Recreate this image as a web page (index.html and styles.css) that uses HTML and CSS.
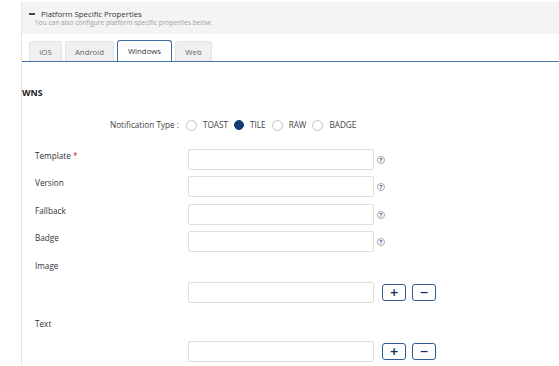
FILE: index.html
```html
<!DOCTYPE html>
<html lang="en">
<head>
  <meta charset="UTF-8">
  <meta name="viewport" content="width=device-width, initial-scale=1.0">
  <title>Platform Specific Properties</title>
  <link rel="stylesheet" href="styles.css">
</head>
<body>
  <div class="panel">
    <div class="panel-head">
      <div class="head-title"><span class="toggle"></span>Platform Specific Properties</div>
      <div class="head-sub">You can also configure platform specific properties below.</div>
    </div>

    <ul class="tabs">
      <li class="tab tab-ios">iOS</li>
      <li class="tab tab-android">Android</li>
      <li class="tab tab-windows active">Windows</li>
      <li class="tab tab-web">Web</li>
    </ul>

    <div class="pane">
      <h4 class="section">WNS</h4>

      <div class="type-row">
        <span class="type-label">Notification Type :</span>
        <span class="radio"></span><span class="radio-text">TOAST</span>
        <span class="radio checked"></span><span class="radio-text">TILE</span>
        <span class="radio"></span><span class="radio-text">RAW</span>
        <span class="radio"></span><span class="radio-text">BADGE</span>
      </div>

      <div class="field">
        <label class="field-label">Template <span class="req">*</span></label>
        <input class="text-input" type="text">
        <span class="help">?</span>
      </div>
      <div class="field">
        <label class="field-label">Version</label>
        <input class="text-input" type="text">
        <span class="help">?</span>
      </div>
      <div class="field">
        <label class="field-label">Fallback</label>
        <input class="text-input" type="text">
        <span class="help">?</span>
      </div>
      <div class="field">
        <label class="field-label">Badge</label>
        <input class="text-input" type="text">
        <span class="help">?</span>
      </div>

      <label class="list-label">Image</label>
      <div class="list-row">
        <input class="text-input" type="text">
        <button class="icon-btn">+</button>
        <button class="icon-btn">&minus;</button>
      </div>

      <label class="list-label">Text</label>
      <div class="list-row">
        <input class="text-input" type="text">
        <button class="icon-btn">+</button>
        <button class="icon-btn">&minus;</button>
      </div>
    </div>
  </div>
</body>
</html>
```

FILE: styles.css
```css
body {
  margin: 0;
  font-family: "Open Sans", "Noto Sans", sans-serif;
  color: #333;
  background: #fff;
}
.panel {
  margin: 2px 0 0 21px;
  border-left: 1px solid #e6e6e6;
  min-height: 364px;
}
.panel-head {
  background: #f4f4f4;
  padding: 7px 0 7px 0;
}
.head-title {
  display: flex;
  align-items: center;
  padding-left: 7px;
  font-size: 7.8px;
  line-height: 10px;
  color: #333;
}
.toggle {
  width: 6px;
  height: 1.5px;
  background: #444;
  margin-right: 6px;
}
.head-sub {
  padding-left: 13px;
  font-size: 6.6px;
  line-height: 8px;
  color: #a0a0a0;
}
.tabs {
  list-style: none;
  margin: 6px 0 0 0;
  padding: 0 0 0 7px;
  display: flex;
  align-items: flex-end;
  gap: 3px;
  height: 21px;
  border-bottom: 1px solid #4a73a5;
}
.tab {
  box-sizing: border-box;
  height: 20px;
  line-height: 20px;
  text-align: center;
  font-size: 7.8px;
  color: #666;
  background: #f0f0f0;
  border: 1px solid #e4e4e4;
  border-bottom: none;
  border-radius: 3px 3px 0 0;
}
.tab-ios { width: 33px; }
.tab-android { width: 49px; }
.tab-windows { width: 55px; }
.tab-web { width: 37px; }
.tab.active {
  height: 21px;
  line-height: 21px;
  color: #333;
  background: #fff;
  border-color: #3f6a9e;
}
.section {
  margin: 25px 0 0 0;
  font-size: 8.8px;
  line-height: 12px;
  font-weight: 700;
  color: #222;
}
.type-row {
  display: flex;
  align-items: center;
  margin: 19px 0 0 88px;
  height: 12px;
  font-size: 8.2px;
  color: #444;
}
.type-label {
  margin-right: 7px;
}
.radio {
  width: 9px;
  height: 9px;
  border: 1px solid #c4c4c4;
  border-radius: 50%;
  background: #fff;
  margin-top: 2px;
}
.radio.checked {
  width: 8px;
  height: 8px;
  border: 1.5px solid #0f3c72;
  background: #0f3c72;
}
.radio-text {
  margin: 0 6px 0 6px;
}
.field {
  display: flex;
  align-items: flex-start;
  margin-top: 6.5px;
  height: 21px;
}
.type-row + .field {
  margin-top: 18.5px;
}
.field-label, .list-label {
  display: block;
  width: 153px;
  padding-left: 13px;
  font-size: 8.2px;
  line-height: 12px;
  margin-top: 1px;
  color: #333;
}
.req {
  color: #e0262b;
}
.text-input {
  box-sizing: border-box;
  width: 186px;
  height: 21px;
  margin: 0;
  border: 1px solid #dedede;
  border-radius: 2px;
  background: #fff;
  font: inherit;
}
.help {
  box-sizing: border-box;
  width: 8px;
  height: 8px;
  margin: 7px 0 0 3px;
  border: 1px solid #a8a8a8;
  border-radius: 50%;
  font-size: 6px;
  line-height: 6px;
  font-weight: 700;
  text-align: center;
  color: #2e5d98;
}
.list-label {
  margin: 8px 0 0 0;
}
.list-row + .list-label {
  margin-top: 15px;
}
.list-row {
  display: flex;
  align-items: center;
  margin: 10px 0 0 166px;
  height: 21px;
}
.list-row + .list-label + .list-row {
  margin-top: 11px;
}
.icon-btn {
  box-sizing: border-box;
  width: 24px;
  height: 17px;
  margin-left: 8px;
  padding: 0;
  border: 1px solid #2f5b8e;
  border-radius: 3px;
  background: #fff;
  color: #0f2f5c;
  font-family: "DejaVu Sans", sans-serif;
  font-size: 11px;
  font-weight: 700;
  line-height: 15px;
}
.icon-btn + .icon-btn {
  margin-left: 6px;
}
```
